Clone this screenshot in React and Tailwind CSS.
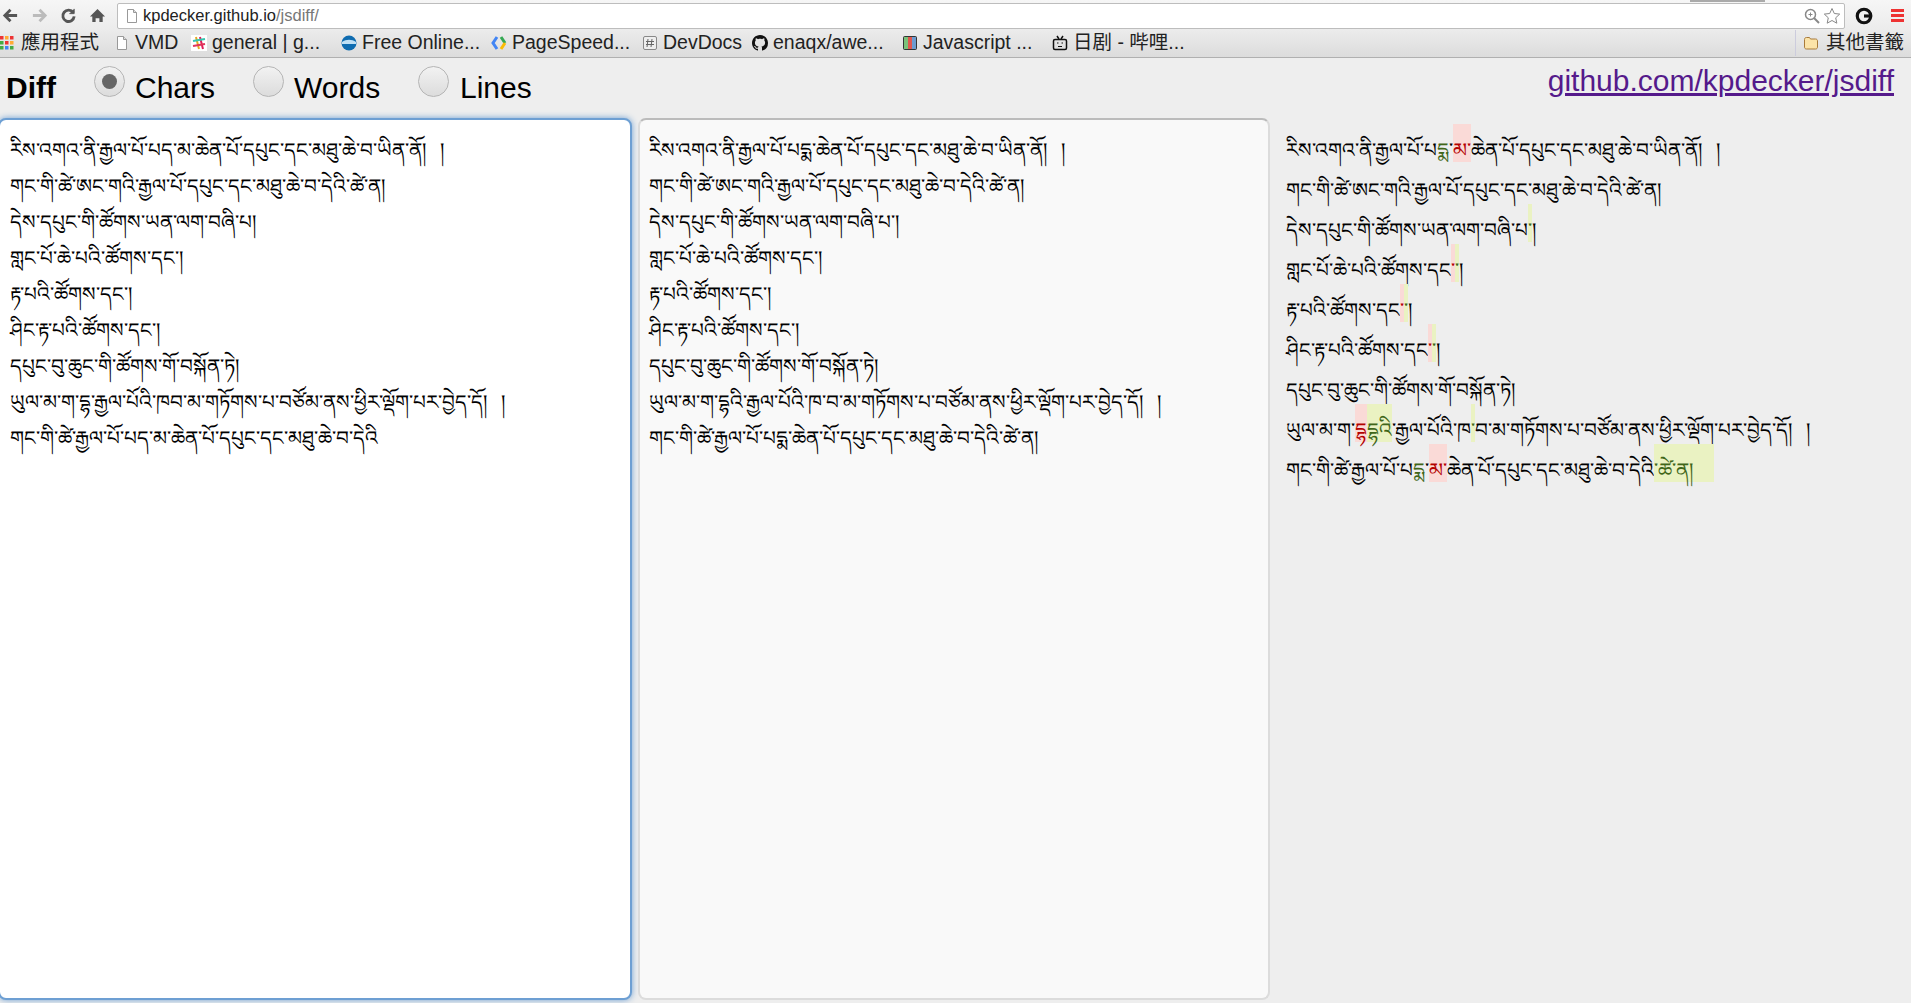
const F = '"Liberation Sans", Arial, sans-serif';
const CJK = '"Liberation Sans", "Noto Sans CJK TC", sans-serif';

function R({ children }) {
  return <span className="bg-[#fadad7] text-[#b30000] pt-[15px] pb-[1px]">{children}</span>;
}
function G({ children }) {
  return <span className="bg-[#eaf2c2] text-[#406619] pt-[15px] pb-[1px]">{children}</span>;
}

const BM = [
  { label: '應用程式', w: 'w-[114px]', icon: 'apps' },
  { label: 'VMD', w: 'w-[77px]', icon: 'page' },
  { label: 'general | g...', w: 'w-[150px]', icon: 'slack' },
  { label: 'Free Online...', w: 'w-[150px]', icon: 'globe' },
  { label: 'PageSpeed...', w: 'w-[151px]', icon: 'speed' },
  { label: 'DevDocs', w: 'w-[110px]', icon: 'dev' },
  { label: 'enaqx/awe...', w: 'w-[150px]', icon: 'gh' },
  { label: 'Javascript ...', w: 'w-[150px]', icon: 'js' },
  { label: '日剧 - 哔哩...', w: 'w-[140px]', icon: 'tv' },
];

function BmIcon({ type }) {
  if (type === 'apps')
    return (
      <svg width="16" height="16" viewBox="0 0 16 16">
        {[['#e33', '#fa3', '#e33'], ['#4a4', '#e33', '#fa3'], ['#4a4', '#4285f4', '#4a4']].map((row, y) =>
          row.map((c, x) => <rect key={x + '-' + y} x={x * 5} y={y * 5 + 1} width="3.5" height="3.5" fill={c} />)
        )}
      </svg>
    );
  if (type === 'page')
    return (
      <svg width="16" height="16" viewBox="0 0 16 16">
        <path d="M3.500 1.500h6l3 3v10h-9z" fill="#fff" stroke="#999" />
        <path d="M9.500 1.500v3h3" fill="#ddd" stroke="#999" />
      </svg>
    );
  if (type === 'slack')
    return (
      <svg width="16" height="16" viewBox="0 0 16 16">
        <rect width="16" height="16" fill="#fff" />
        <path d="M5 2l3 12" stroke="#e8a820" strokeWidth="2" />
        <path d="M9 2l3 12" stroke="#e01e5a" strokeWidth="2" />
        <path d="M2 6l12-2" stroke="#36c5b0" strokeWidth="2" />
        <path d="M2 11l12-2" stroke="#e0365a" strokeWidth="2" />
      </svg>
    );
  if (type === 'globe')
    return (
      <svg width="16" height="16" viewBox="0 0 16 16">
        <circle cx="8" cy="8" r="7.500" fill="#0f6cb0" />
        <path d="M1 7c4-3 10-3 14 0v2H1z" fill="#bfe0f5" />
      </svg>
    );
  if (type === 'speed')
    return (
      <svg width="16" height="16" viewBox="0 0 16 16" fill="none" strokeWidth="3">
        <path d="M6 2L2 8l4 6" stroke="#4285f4" />
        <path d="M10 2l4 6" stroke="#34a853" />
        <path d="M14 8l-4 6" stroke="#fbbc05" />
      </svg>
    );
  if (type === 'dev')
    return (
      <svg width="16" height="16" viewBox="0 0 16 16">
        <rect x="1.500" y="1.500" width="13" height="13" rx="1.500" fill="#eee" stroke="#888" />
        <path d="M6 4l-1 8M10 4l-1 8M4 6.500h8M4 9.500h8" stroke="#666" fill="none" />
      </svg>
    );
  if (type === 'gh')
    return (
      <svg width="16" height="16" viewBox="0 0 16 16">
        <path
          fill="#111"
          d="M8 0C3.580 0 0 3.580 0 8c0 3.540 2.290 6.530 5.470 7.590.4.070.55-.17.55-.38 0-.19-.01-.82-.01-1.490-2.010.37-2.530-.49-2.690-.94-.09-.23-.48-.94-.82-1.130-.28-.15-.68-.52-.01-.53.63-.01 1.080.58 1.230.82.72 1.210 1.870.87 2.330.66.07-.52.28-.87.51-1.070-1.780-.2-3.640-.89-3.640-3.950 0-.87.31-1.590.82-2.150-.08-.2-.36-1.020.08-2.120 0 0 .67-.21 2.200.82.64-.18 1.320-.27 2-.27s1.360.09 2 .27c1.530-1.040 2.200-.82 2.200-.82.44 1.100.16 1.920.08 2.120.51.56.82 1.270.82 2.150 0 3.070-1.870 3.750-3.650 3.950.29.25.54.73.54 1.480 0 1.070-.01 1.930-.01 2.200 0 .21.15.46.55.38A8.010 8.010 0 0016 8c0-4.420-3.580-8-8-8z"
        />
      </svg>
    );
  if (type === 'js')
    return (
      <svg width="16" height="16" viewBox="0 0 16 16">
        <rect x="1" y="1" width="14" height="14" rx="2" fill="#333" />
        <rect x="2" y="2" width="4" height="12" fill="#7ac27a" />
        <rect x="6" y="2" width="4" height="12" fill="#e0574f" />
        <rect x="10" y="2" width="4" height="12" fill="#6c9bd0" />
      </svg>
    );
  return (
    <svg width="16" height="16" viewBox="0 0 16 16" fill="none" stroke="#111">
      <rect x="1.500" y="4.500" width="13" height="10" rx="1.500" strokeWidth="1.500" />
      <path d="M5 1l2 3M11 1L9 4" strokeWidth="1.500" />
      <path d="M5 8h1.500M9.500 8H11M6 11.500h4" />
    </svg>
  );
}

function Radio({ checked }) {
  return (
    <span className="w-[31px] h-[31px] rounded-full border border-[#b5b5b5] bg-gradient-to-b from-[#f2f2f2] to-[#dcdcdc] flex items-center justify-center shrink-0 mt-[8px]">
      {checked && <span className="w-[15px] h-[15px] rounded-full bg-[#666]" />}
    </span>
  );
}

const lineCls = 'h-[36px] whitespace-pre';
const diffLine = 'h-[40px] whitespace-pre';

function Left() {
  return (
    <>
      <div className={lineCls}>རིས་འགའ་ནི་རྒྱལ་པོ་པད་མ་ཆེན་པོ་དཔུང་དང་མཐུ་ཆེ་བ་ཡིན་ནོ། །</div>
      <div className={lineCls}>གང་གི་ཚེ་ཨང་གའི་རྒྱལ་པོ་དཔུང་དང་མཐུ་ཆེ་བ་དེའི་ཚེ་ན།</div>
      <div className={lineCls}>དེས་དཔུང་གི་ཚོགས་ཡན་ལག་བཞི་པ།</div>
      <div className={lineCls}>གླང་པོ་ཆེ་པའི་ཚོགས་དང་།</div>
      <div className={lineCls}>རྟ་པའི་ཚོགས་དང་།</div>
      <div className={lineCls}>ཤིང་རྟ་པའི་ཚོགས་དང་།</div>
      <div className={lineCls}>དཔུང་བུ་ཆུང་གི་ཚོགས་གོ་བསྐོན་ཏེ།</div>
      <div className={lineCls}>ཡུལ་མ་ག་དྷ་རྒྱལ་པོའི་ཁབ་མ་གཏོགས་པ་བཙོམ་ནས་ཕྱིར་ལྡོག་པར་བྱེད་དོ། །</div>
      <div className={lineCls}>གང་གི་ཚེ་རྒྱལ་པོ་པད་མ་ཆེན་པོ་དཔུང་དང་མཐུ་ཆེ་བ་དེའི</div>
    </>
  );
}

function Mid() {
  return (
    <>
      <div className={lineCls}>རིས་འགའ་ནི་རྒྱལ་པོ་པདྨ་ཆེན་པོ་དཔུང་དང་མཐུ་ཆེ་བ་ཡིན་ནོ། །</div>
      <div className={lineCls}>གང་གི་ཚེ་ཨང་གའི་རྒྱལ་པོ་དཔུང་དང་མཐུ་ཆེ་བ་དེའི་ཚེ་ན།</div>
      <div className={lineCls}>དེས་དཔུང་གི་ཚོགས་ཡན་ལག་བཞི་པ་།</div>
      <div className={lineCls}>གླང་པོ་ཆེ་པའི་ཚོགས་དང་།</div>
      <div className={lineCls}>རྟ་པའི་ཚོགས་དང་།</div>
      <div className={lineCls}>ཤིང་རྟ་པའི་ཚོགས་དང་།</div>
      <div className={lineCls}>དཔུང་བུ་ཆུང་གི་ཚོགས་གོ་བསྐོན་ཏེ།</div>
      <div className={lineCls}>ཡུལ་མ་ག་དྷའི་རྒྱལ་པོའི་ཁ་བ་མ་གཏོགས་པ་བཙོམ་ནས་ཕྱིར་ལྡོག་པར་བྱེད་དོ། །</div>
      <div className={lineCls}>གང་གི་ཚེ་རྒྱལ་པོ་པདྨ་ཆེན་པོ་དཔུང་དང་མཐུ་ཆེ་བ་དེའི་ཚེ་ན།</div>
    </>
  );
}

function Diff() {
  return (
    <>
      <div className={diffLine}>རིས་འགའ་ནི་རྒྱལ་པོ་པ<span className="text-[#406619]">དྨ</span>་<R>མ་</R>ཆེན་པོ་དཔུང་དང་མཐུ་ཆེ་བ་ཡིན་ནོ། །</div>
      <div className={diffLine}>གང་གི་ཚེ་ཨང་གའི་རྒྱལ་པོ་དཔུང་དང་མཐུ་ཆེ་བ་དེའི་ཚེ་ན།</div>
      <div className={diffLine}>དེས་དཔུང་གི་ཚོགས་ཡན་ལག་བཞི་པ<G>་</G>།</div>
      <div className={diffLine}>གླང་པོ་ཆེ་པའི་ཚོགས་དང<R>་</R><G>་</G>།</div>
      <div className={diffLine}>རྟ་པའི་ཚོགས་དང<R>་</R><G>་</G>།</div>
      <div className={diffLine}>ཤིང་རྟ་པའི་ཚོགས་དང<R>་</R><G>་</G>།</div>
      <div className={diffLine}>དཔུང་བུ་ཆུང་གི་ཚོགས་གོ་བསྐོན་ཏེ།</div>
      <div className={diffLine}>ཡུལ་མ་ག་<R>དྷ</R><G>དྷའི</G>་རྒྱལ་པོའི་ཁ<G>་</G>བ་མ་གཏོགས་པ་བཙོམ་ནས་ཕྱིར་ལྡོག་པར་བྱེད་དོ། །</div>
      <div className={diffLine}>གང་གི་ཚེ་རྒྱལ་པོ་པ<span className="text-[#406619]">དྨ</span>་<R>མ་</R>ཆེན་པོ་དཔུང་དང་མཐུ་ཆེ་བ་དེའི<span className="bg-[#eaf2c2] text-[#406619] pt-[15px] pb-[1px] pr-[7px]">་ཚེ་ན། </span></div>
    </>
  );
}

export default function App() {
  return (
    <div className="relative w-[1911px] h-[1003px] overflow-hidden flex flex-col bg-[#eeeeee]" style={{ fontFamily: F }}>
      <div className="absolute left-[1690px] top-0 w-[75px] h-[2px] bg-[#aaaaaa]" />
      <div className="h-[29px] shrink-0 bg-gradient-to-b from-[#f6f6f6] to-[#ececec] flex items-center pt-[2px]">
        <div className="w-[117px] flex items-center gap-[12px] pl-[2px]">
          <svg width="17" height="17" viewBox="0 0 18 18" fill="none" stroke="#555" strokeWidth="3"><path d="M16 9H4M9 3L3 9l6 6" /></svg>
          <svg width="17" height="17" viewBox="0 0 18 18" fill="none" stroke="#bbb" strokeWidth="3"><path d="M2 9h12M9 3l6 6-6 6" /></svg>
          <svg width="17" height="17" viewBox="0 0 18 18" fill="none" stroke="#555" strokeWidth="3"><path d="M14 6a6 6 0 1 0 1 4" /><path d="M15 2v5h-5" fill="#555" strokeWidth="1" /></svg>
          <svg width="17" height="17" viewBox="0 0 18 18" fill="#555"><path d="M9 2L1 10h2.500v6H7v-4h4v4h3.500v-6H17z" /></svg>
        </div>
        <div className="w-[1728px] h-[26px] bg-white border border-[#bdbdbd] rounded-[2px] flex items-center pl-[6px] pr-[3px]">
          <svg width="16" height="16" viewBox="0 0 16 16"><path d="M3.500 1.500h6l3 3v10h-9z" fill="#fff" stroke="#999" /><path d="M9.500 1.500v3h3" fill="#ddd" stroke="#999" /></svg>
          <span className="ml-[3px] text-[16.5px] text-[#222]">kpdecker.github.io<span className="text-[#777]">/jsdiff/</span></span>
          <span className="flex-1" />
          <svg width="16" height="16" viewBox="0 0 16 16" fill="none" stroke="#888" strokeWidth="1.500"><circle cx="6.500" cy="6.500" r="5" /><path d="M10 10l5 5" strokeWidth="2" /><path d="M6.500 4.500v4M4.500 6.500h4" strokeWidth="1" /></svg>
          <svg className="ml-[3px]" width="18" height="18" viewBox="0 0 18 18" fill="#fff" stroke="#888"><path d="M9 1.500l2.300 5 5.400.6-4 3.700 1.100 5.400L9 13.500l-4.800 2.700 1.100-5.400-4-3.700 5.400-.6z" /></svg>
        </div>
        <div className="flex-1 flex items-center pl-[10px]">
          <svg width="18" height="18" viewBox="0 0 20 20" fill="none" stroke="#111" strokeWidth="3.500"><circle cx="10" cy="10" r="7.500" /><path d="M10 10h9" /></svg>
          <span className="flex flex-col gap-[2px] w-[13px] ml-[18px]">
            <span className="h-[3px] bg-[#e33]" />
            <span className="h-[3px] bg-[#e33]" />
            <span className="h-[3px] bg-[#e33]" />
          </span>
        </div>
      </div>
      <div className="h-[29px] shrink-0 bg-gradient-to-b from-[#ececec] to-[#dcdcdc] border-b border-[#b0b0b0] flex items-center text-[19.5px] text-[#222]" style={{ fontFamily: CJK }}>
        {BM.map((b) => (
          <div key={b.label} className={'flex items-center gap-[5px] shrink-0 whitespace-nowrap ' + b.w}>
            <BmIcon type={b.icon} />
            <span>{b.label}</span>
          </div>
        ))}
        <span className="flex-1" />
        <div className="flex items-center gap-[7px] pl-[7px] pr-[7px] border-l border-[#ccd] h-[26px]">
          <svg width="16" height="16" viewBox="0 0 16 16"><path d="M1.500 4.500c0-1 .5-2 2-2h3l1 1.500h5c1.500 0 2 1 2 2v6c0 1-.5 2-2 2h-9c-1.500 0-2-1-2-2z" fill="#fbe3a8" stroke="#a87a3a" /></svg>
          <span>其他書籤</span>
        </div>
      </div>
      <div className="h-[60px] shrink-0 flex items-start justify-between pr-[17px] text-[30px] leading-[30px] text-black">
        <div className="flex items-start">
          <span className="font-bold ml-[6px] w-[88px] mt-[15px]">Diff</span>
          <Radio checked />
          <span className="ml-[10px] w-[118px] mt-[15px]">Chars</span>
          <Radio />
          <span className="ml-[10px] w-[124px] mt-[15px]">Words</span>
          <Radio />
          <span className="ml-[11px] mt-[15px]">Lines</span>
        </div>
        <a className="text-[#551a8b] underline mt-[8px]">github.com/kpdecker/jsdiff</a>
      </div>
      <div className="flex-1 flex items-stretch gap-[6px] pb-[3px] text-[20px] leading-[36px] text-black [word-spacing:8px]">
        <div className="relative z-10 w-[634px] -ml-[2px] bg-white rounded-[8px] border-2 border-[#6d9fd3] pl-[10px] pt-[12px] shadow-[0_0_6px_#6d9fd3] overflow-hidden"><Left /></div>
        <div className="w-[632px] bg-[#f9f9f9] rounded-[8px] border-2 border-[#dcdcdc] border-t-[#bbbbbb] pl-[9px] pt-[12px] overflow-hidden"><Mid /></div>
        <div className="flex-1 pl-[10px] pt-[14px] overflow-hidden"><Diff /></div>
      </div>
    </div>
  );
}
